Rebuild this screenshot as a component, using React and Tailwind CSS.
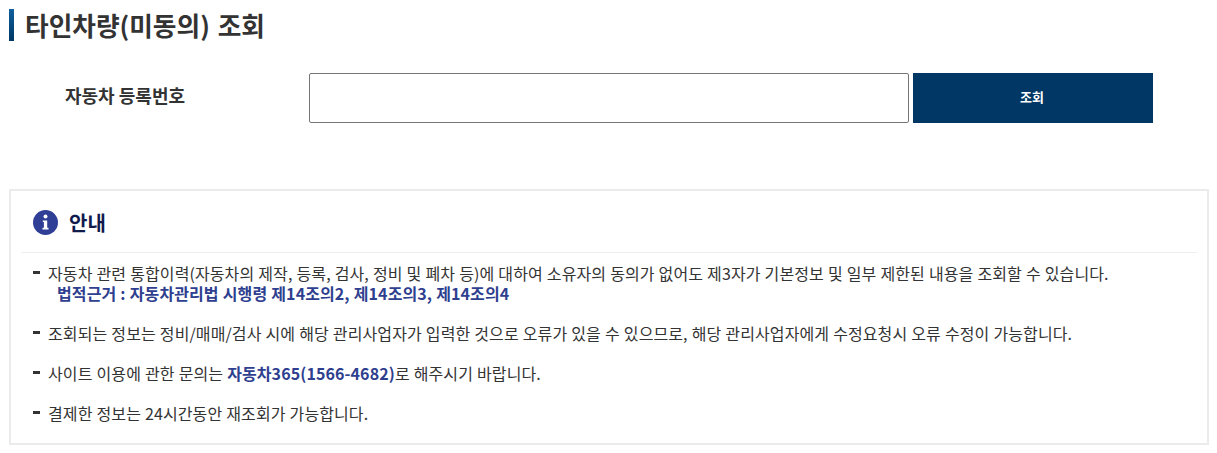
const cjk = { fontFamily: '"Noto Sans CJK KR", "Noto Sans", sans-serif' };

function Item({ children, className = "" }) {
  return (
    <li className={`flex text-[16px] leading-[20px] tracking-[0.1px] [word-spacing:0.35px] text-[#333] ${className}`}>
      <span className="mt-[8px] mr-[8px] h-[3px] w-[7px] shrink-0 bg-[#333]" />
      <div>{children}</div>
    </li>
  );
}

export default function App() {
  return (
    <div style={cjk} className="w-[1217px] h-[453px] bg-white pt-[9px] pl-[9px] overflow-hidden">
      <div className="flex h-[32px] items-center">
        <span className="h-[32px] w-[5px] bg-gradient-to-b from-[#11609f] to-[#003764]" />
        <h1 className="ml-[11px] text-[25.7px] font-bold leading-[32px] [word-spacing:2px] text-[#333]">타인차량(미동의) 조회</h1>
      </div>

      <div className="mt-[32px] flex h-[50px]">
        <div className="w-[300px] pl-[56px] pt-[10px] text-[18px] font-bold leading-[24px] text-[#333]">자동차 등록번호</div>
        <input className="h-[50px] w-[600px] rounded-[2px] border border-[#767676] bg-white" />
        <button className="ml-[4px] h-[50px] w-[240px] bg-[#003764] pb-[2px] pr-[2px] text-[13px] font-bold text-white">조회</button>
      </div>

      <div className="mt-[66px] h-[256px] w-[1200px] border-2 border-[#ebebeb] px-[10px]">
        <div className="flex h-[62px] items-center border-b border-[#eeeeee] pl-[12px] pt-[2px]">
          <svg width="25" height="25" viewBox="0 0 25 25">
            <circle cx="12.5" cy="12.5" r="12.5" fill="#2f3f96" />
            <circle cx="12.5" cy="6.6" r="2" fill="#fff" />
            <path d="M9.8 10.4h4.4v7.4h1.3v1.6h-6v-1.6h1.4v-5.8H9.8z" fill="#fff" />
          </svg>
          <span className="ml-[11px] text-[20px] font-bold text-[#111a4d]">안내</span>
        </div>
        <ul className="pl-[12px] pt-[10px]">
          <Item>
            자동차 관련 통합이력(자동차의 제작, 등록, 검사, 정비 및 폐차 등)에 대하여 소유자의 동의가 없어도 제3자가 기본정보 및 일부 제한된 내용을 조회할 수 있습니다.
            <div className="pl-[9px] font-bold text-[#2f3f8f]">법적근거 : 자동차관리법 시행령 제14조의2, 제14조의3, 제14조의4</div>
          </Item>
          <Item className="mt-[20px]">조회되는 정보는 정비/매매/검사 시에 해당 관리사업자가 입력한 것으로 오류가 있을 수 있으므로, 해당 관리사업자에게 수정요청시 오류 수정이 가능합니다.</Item>
          <Item className="mt-[20px]">
            <span>사이트 이용에 관한 문의는 <b className="font-bold text-[#2f3f8f]">자동차365(1566-4682)</b>로 해주시기 바랍니다.</span>
          </Item>
          <Item className="mt-[20px]">결제한 정보는 24시간동안 재조회가 가능합니다.</Item>
        </ul>
      </div>
    </div>
  );
}
